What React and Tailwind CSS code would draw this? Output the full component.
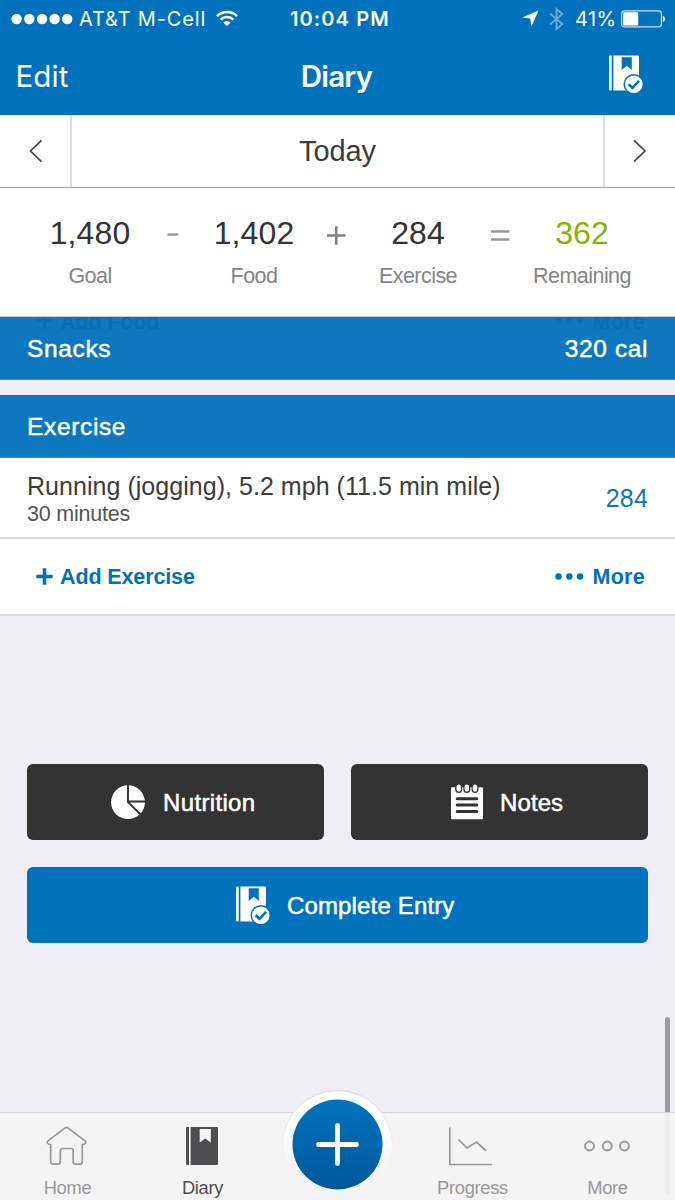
import React from "react";

const HELV = "font-['Liberation_Sans',Arial,sans-serif]";

function BookCheck({ bg = "#0072bc", className = "" }) {
  return (
    <svg width="35" height="39" viewBox="0 0 35 39" className={className}>
      <path d="M1.2 .5H2.7V35.5H1.2A1.2 1.2 0 0 1 0 34.300V1.700A1.2 1.2 0 0 1 1.200 .5Z" fill="#fff" />
      <path d="M4.400 .5H29A1 1 0 0 1 30 1.500V34.500A1 1 0 0 1 29 35.500H4.400Z" fill="#fff" />
      <path d="M12.700 2.200H22.800V14.900L17.750 10.800L12.700 14.900Z" fill={bg} />
      <circle cx="24.800" cy="29.300" r="10.300" fill={bg} />
      <circle cx="24.800" cy="29.300" r="8.800" fill="#fff" />
      <path d="M19.600 29.200L23.400 32.800L30.100 25.900" fill="none" stroke={bg} strokeWidth="2.600" />
    </svg>
  );
}

function StatusBar() {
  return (
    <div className="flex h-[37px] items-center font-['Inter',sans-serif] text-[20px] leading-none">
      <div className="flex w-[290px] items-center pl-[11px]">
        <svg width="62" height="12" viewBox="0 0 62 12" fill="#fff">
          <circle cx="5.600" cy="6" r="5.200" />
          <circle cx="18.300" cy="6" r="5.200" />
          <circle cx="31" cy="6" r="5.200" />
          <circle cx="43.600" cy="6" r="5.200" />
          <circle cx="56.200" cy="6" r="5.200" />
        </svg>
        <span className="ml-[6px] w-[128px] whitespace-nowrap tracking-[0.85px]">AT&amp;T M-Cell</span>
        <svg width="22" height="17" viewBox="0 0 22 17" className="ml-[9px]" fill="none" stroke="#fff" strokeWidth="2.500">
          <path d="M1 6.200A14.200 14.200 0 0 1 21 6.200" />
          <path d="M4.600 9.700A9.200 9.200 0 0 1 17.400 9.700" />
          <path d="M7.300 12.600A5.200 5.200 0 0 1 14.700 12.600L11 16.300Z" fill="#fff" stroke="none" />
        </svg>
      </div>
      <span className="w-[232px] whitespace-nowrap font-semibold tracking-[1.1px]">10:04 PM</span>
      <svg width="17" height="17" viewBox="0 0 17 17" fill="#fff">
        <path d="M16.500 .5L9.500 16.500L8.200 8.500L.3 7.400Z" />
      </svg>
      <svg width="15" height="24" viewBox="0 0 15 24" className="ml-[10px]" fill="none" stroke="#66aad7" strokeWidth="1.800">
        <path d="M1 6.500L13.300 17L7.500 22V2L13.300 7L1 17.500" />
      </svg>
      <span className="ml-[11px] w-[46px] whitespace-nowrap tracking-[0.4px]">41%</span>
      <svg width="45" height="18" viewBox="0 0 45 18">
        <rect x=".6" y=".9" width="39.800" height="16" rx="2.800" fill="none" stroke="#fff" strokeOpacity=".8" strokeWidth="1.200" />
        <rect x="2" y="2.300" width="15.200" height="13.200" rx="1" fill="#fff" />
        <path d="M41.800 5.700A3.500 3.500 0 0 1 41.800 12.300Z" fill="#fff" />
      </svg>
    </div>
  );
}

function NavBar() {
  return (
    <div className="flex h-[78px] items-center justify-between pl-[15px] pr-[31px] pt-px font-['Inter',sans-serif] text-[29.500px] leading-none">
      <span className="w-[220px] whitespace-nowrap pl-[0.5px] tracking-[0.1px]">Edit</span>
      <span className="-ml-[2px] whitespace-nowrap font-semibold tracking-[-0.8px]">Diary</span>
      <div className="flex w-[204px] justify-end">
        <BookCheck className="-mt-[4px]" />
      </div>
    </div>
  );
}

function DateRow() {
  return (
    <div className="flex h-[73px] border-b border-[#a3a3a5] bg-white">
      <div className="flex w-[72px] items-center justify-center border-r-2 border-[#dededf] pl-[2px]">
        <svg width="14" height="24" viewBox="0 0 14 24" fill="none" stroke="#444" strokeWidth="1.700">
          <path d="M12.500 1.300L1.500 12L12.500 22.700" />
        </svg>
      </div>
      <div className="flex flex-1 items-center justify-center text-[29px] leading-none tracking-[-0.1px] text-[#3c3c3c]">Today</div>
      <div className="flex w-[72px] items-center justify-center border-l-2 border-[#dededf]">
        <svg width="14" height="24" viewBox="0 0 14 24" fill="none" stroke="#444" strokeWidth="1.700">
          <path d="M1 1.300L12 12L1 22.700" />
        </svg>
      </div>
    </div>
  );
}

function Figure({ value, label, color = "text-[#333]" }) {
  return (
    <div className="flex flex-col items-center whitespace-nowrap">
      <span className={"text-[32px] leading-[38px] tracking-[0.1px] " + color}>{value}</span>
      <span className="mt-[13px] text-[21.500px] leading-[22px] tracking-[-0.55px] text-[#858585]">{label}</span>
    </div>
  );
}

function Operator({ d, color = "#999" }) {
  return (
    <div className="flex justify-center">
      <svg width="20" height="40" viewBox="0 0 20 40" stroke={color} strokeWidth="2.500" fill="none">
        <path d={d} />
      </svg>
    </div>
  );
}

function Summary() {
  return (
    <div className="h-[129px] border-b border-[#c9cbcc] bg-white px-[49px] pt-[26px]">
      <div className="grid grid-cols-[repeat(7,82px)]">
        <Figure value="1,480" label="Goal" />
        <Operator d="M5.500 20.500H16.300" />
        <Figure value="1,402" label="Food" />
        <Operator d="M1 21.500H19.600M10.300 12.300V30.700" color="#808080" />
        <Figure value="284" label="Exercise" />
        <Operator d="M1 17.500H19.400M1 25.500H19.400" />
        <Figure value="362" label="Remaining" color="text-[#84b600]" />
      </div>
    </div>
  );
}

const MEDIUM = "[-webkit-text-stroke:0.5px_currentColor]";

function SectionHeader({ title, right, children }) {
  return (
    <div className="relative flex h-[63px] items-center justify-between overflow-hidden border-b border-[#3490cd] bg-[#0d78c0] px-[27px] pt-[2px] text-[24.500px] leading-none text-white">
      {children}
      <span className={"relative whitespace-nowrap tracking-[0.65px] " + MEDIUM}>{title}</span>
      <span className={"relative whitespace-nowrap tracking-[0.6px] " + MEDIUM}>{right}</span>
    </div>
  );
}

function Actions({ label }) {
  return (
    <>
      <span className="flex items-center">
        <svg width="17" height="17" viewBox="0 0 17 17" stroke="currentColor" strokeWidth="3.600" className="-mt-px">
          <path d="M.3 8.500H16.700M8.500 .3V16.700" />
        </svg>
        <span className="ml-[7px] whitespace-nowrap pt-[3px] tracking-[-0.12px]">{label}</span>
      </span>
      <span className="flex items-center">
        <svg width="29" height="7" viewBox="0 0 29 7" fill="currentColor" className="-ml-px -mt-[1px]">
          <circle cx="3.500" cy="3.500" r="3.200" />
          <circle cx="14.300" cy="3.500" r="3.200" />
          <circle cx="25" cy="3.500" r="3.200" />
        </svg>
        <span className="ml-[8px] whitespace-nowrap pt-[3px] tracking-[0.3px]">More</span>
      </span>
    </>
  );
}

function ActionButton({ icon, label, className, text }) {
  return (
    <button className={"flex h-[76px] items-center rounded-[6px] text-[24px] leading-none text-white " + className}>
      {icon}
      <span className={"whitespace-nowrap pt-[2px] " + text + " " + MEDIUM}>{label}</span>
    </button>
  );
}

const pie = (
  <svg width="34" height="35" viewBox="0 0 34 35">
    <circle cx="17" cy="17.200" r="16.900" fill="#fff" />
    <path d="M17 0V17.200L29.500 29.200M17 16.500H34" stroke="#333" strokeWidth="1.900" fill="none" />
  </svg>
);

const notepad = (
  <svg width="32" height="36" viewBox="0 0 32 36">
    <rect x="0" y="3.200" width="32" height="32" rx="1.300" fill="#fff" />
    {[7.7, 15.8, 24].map((x) => (
      <g key={x}>
        <rect x={x - 3.500} y="-1" width="7" height="10" rx="3.500" fill="#333" />
        <rect x={x - 2.200} y=".4" width="4.400" height="7.200" rx="2.200" fill="#fff" />
      </g>
    ))}
    <path d="M6.200 14.800H25.800M6.200 21.100H25.800M6.200 27.400H25.800" stroke="#333" strokeWidth="3" strokeLinecap="round" />
  </svg>
);

function Tab({ label, active, iconClass, children }) {
  return (
    <div className={"flex w-[135px] flex-col items-center text-[18.300px] leading-[20px] tracking-[-0.3px] " + (active ? "text-[#4e4e50]" : "text-[#98989a]")}>
      <div className={"flex h-[65px] items-center " + iconClass}>{children}</div>
      <span>{label}</span>
    </div>
  );
}

function TabBar() {
  return (
    <div className="relative flex h-[88px] border-t border-[#d7d7da] bg-[#f4f4f4]">
      <Tab label="Home" iconClass="pr-[2px]">
        <svg width="41" height="40" viewBox="0 0 41 40" fill="none" stroke="#98989a" strokeWidth="1.700" strokeLinejoin="round">
          <path d="M18.800 2.100Q20.500 .8 22.200 2.100L38.700 14.600Q40.300 16 39.400 17.400Q38.800 18.400 36.300 18.500V35.500Q36.300 38.200 34 38.200H29.500Q27.200 38.200 27.200 36V24.500Q27.200 22.500 25 22.500H16.500Q14.300 22.500 14.300 24.500V36Q14.300 38.200 12 38.200H7Q4.700 38.200 4.700 35.500V18.500Q2.200 18.400 1.600 17.400Q.7 16 2.300 14.600Z" />
        </svg>
      </Tab>
      <Tab label="Diary" active iconClass="pr-[2px]">
        <svg width="32" height="38" viewBox="0 0 32 38" fill="#4e4e50">
          <path d="M1.300 0H3V38H1.300A1.300 1.300 0 0 1 0 36.700V1.300A1.300 1.300 0 0 1 1.300 0ZM4.600 0H30.700A1.300 1.300 0 0 1 32 1.300V36.700A1.300 1.300 0 0 1 30.700 38H4.600Z" />
          <path d="M13.700 2H24.800V15.600L19.250 11.500L13.700 15.600Z" fill="#f4f4f4" />
        </svg>
      </Tab>
      <div className="w-[135px]" />
      <Tab label="Progress" iconClass="pr-[4px] pt-[1px]">
        <svg width="44" height="39" viewBox="0 0 44 39" fill="none" stroke="#98989a" strokeWidth="1.700">
          <path d="M.8 .5V37.500H43M9.500 12.500L18.100 21L27.500 15L36.800 23.500" />
        </svg>
      </Tab>
      <Tab label="More" iconClass="pr-[2px]">
        <svg width="46" height="12" viewBox="0 0 46 12" fill="none" stroke="#98989a" strokeWidth="1.900">
          <circle cx="5.500" cy="6" r="4.500" />
          <circle cx="23.300" cy="6" r="4.500" />
          <circle cx="40.500" cy="6" r="4.500" />
        </svg>
      </Tab>
      <div className="absolute right-[5px] top-0 h-[82px] w-[5px] rounded-b-full bg-[#ececec]" />
      <svg width="112" height="112" viewBox="0 0 112 112" className="absolute left-[281px] top-[-24px]">
        <defs>
          <linearGradient id="ring" x1="0" y1="0" x2="0" y2="1">
            <stop offset="0.250" stopColor="#fff" />
            <stop offset="0.750" stopColor="#f4f4f4" />
          </linearGradient>
          <linearGradient id="edge" x1="0" y1="0" x2="0" y2="1">
            <stop offset="0" stopColor="#d4d4d8" />
            <stop offset="0.500" stopColor="#f0f0f0" />
            <stop offset="0.750" stopColor="#f4f4f4" />
          </linearGradient>
          <linearGradient id="disc" x1="0" y1="0" x2="0" y2="1">
            <stop offset="0" stopColor="#0074bf" />
            <stop offset="1" stopColor="#005699" />
          </linearGradient>
        </defs>
        <circle cx="56.500" cy="56.500" r="55" fill="url(#ring)" stroke="url(#edge)" />
        <circle cx="56.500" cy="55.500" r="46" fill="#fff" />
        <circle cx="56.500" cy="55.500" r="45" fill="url(#disc)" />
        <path d="M37.500 55.500H75.500M56.500 36.500V74.500" stroke="#fff" strokeWidth="4.800" strokeLinecap="round" />
      </svg>
    </div>
  );
}

export default function App() {
  return (
    <div className={"flex h-[1200px] w-[675px] flex-col overflow-hidden bg-[#efeef4] " + HELV}>
      <header className="bg-[#0072bc] text-white">
        <StatusBar />
        <NavBar />
      </header>
      <DateRow />
      <Summary />
      <SectionHeader title="Snacks" right="320 cal">
        <div className="absolute left-[36px] right-[30px] top-[-8px] flex h-[24px] items-center justify-between text-[21.500px] font-bold text-[#086db3]">
          <Actions label="Add Food" />
        </div>
        <div className="absolute inset-x-0 top-[40px] h-px bg-[#0b74bb]" />
      </SectionHeader>
      <div className="mt-[15px]">
        <SectionHeader title="Exercise" right="" />
      </div>
      <div className="flex h-[81px] items-center justify-between border-b-2 border-[#dcdcde] bg-white px-[27px]">
        <div className="flex flex-col whitespace-nowrap pt-[5px]">
          <span className="text-[25px] leading-[27px] tracking-[0.04px] text-[#3c3c3c]">Running (jogging), 5.2 mph (11.5 min mile)</span>
          <span className="text-[21.500px] leading-[28px] tracking-[-0.2px] text-[#555]">30 minutes</span>
        </div>
        <span className="pt-[2px] text-[25px] leading-none tracking-[0.2px] text-[#0b76c0]">284</span>
      </div>
      <div className="flex h-[77px] items-center justify-between border-b-2 border-[#dcdcde] bg-white pl-[36px] pr-[30px] text-[21.500px] font-bold leading-none text-[#0072bc]">
        <Actions label="Add Exercise" />
      </div>
      <main className="relative flex-1 px-[27px] pt-[148px]">
        <div className="grid grid-cols-2 gap-[27px]">
          <ActionButton icon={pie} label="Nutrition" text="ml-[18px] tracking-[0.35px]" className="bg-[#333] pl-[84px]" />
          <ActionButton icon={notepad} label="Notes" text="ml-[17px] tracking-[0.1px]" className="bg-[#333] pl-[100px]" />
        </div>
        <ActionButton icon={<BookCheck />} label="Complete Entry" text="ml-[16px] tracking-[0.15px]" className="mt-[27px] w-full bg-[#0072bc] pl-[209px]" />
        <div className="absolute bottom-0 right-[5px] h-[95px] w-[5px] rounded-t-full bg-[#9d9da0]" />
      </main>
      <TabBar />
    </div>
  );
}
